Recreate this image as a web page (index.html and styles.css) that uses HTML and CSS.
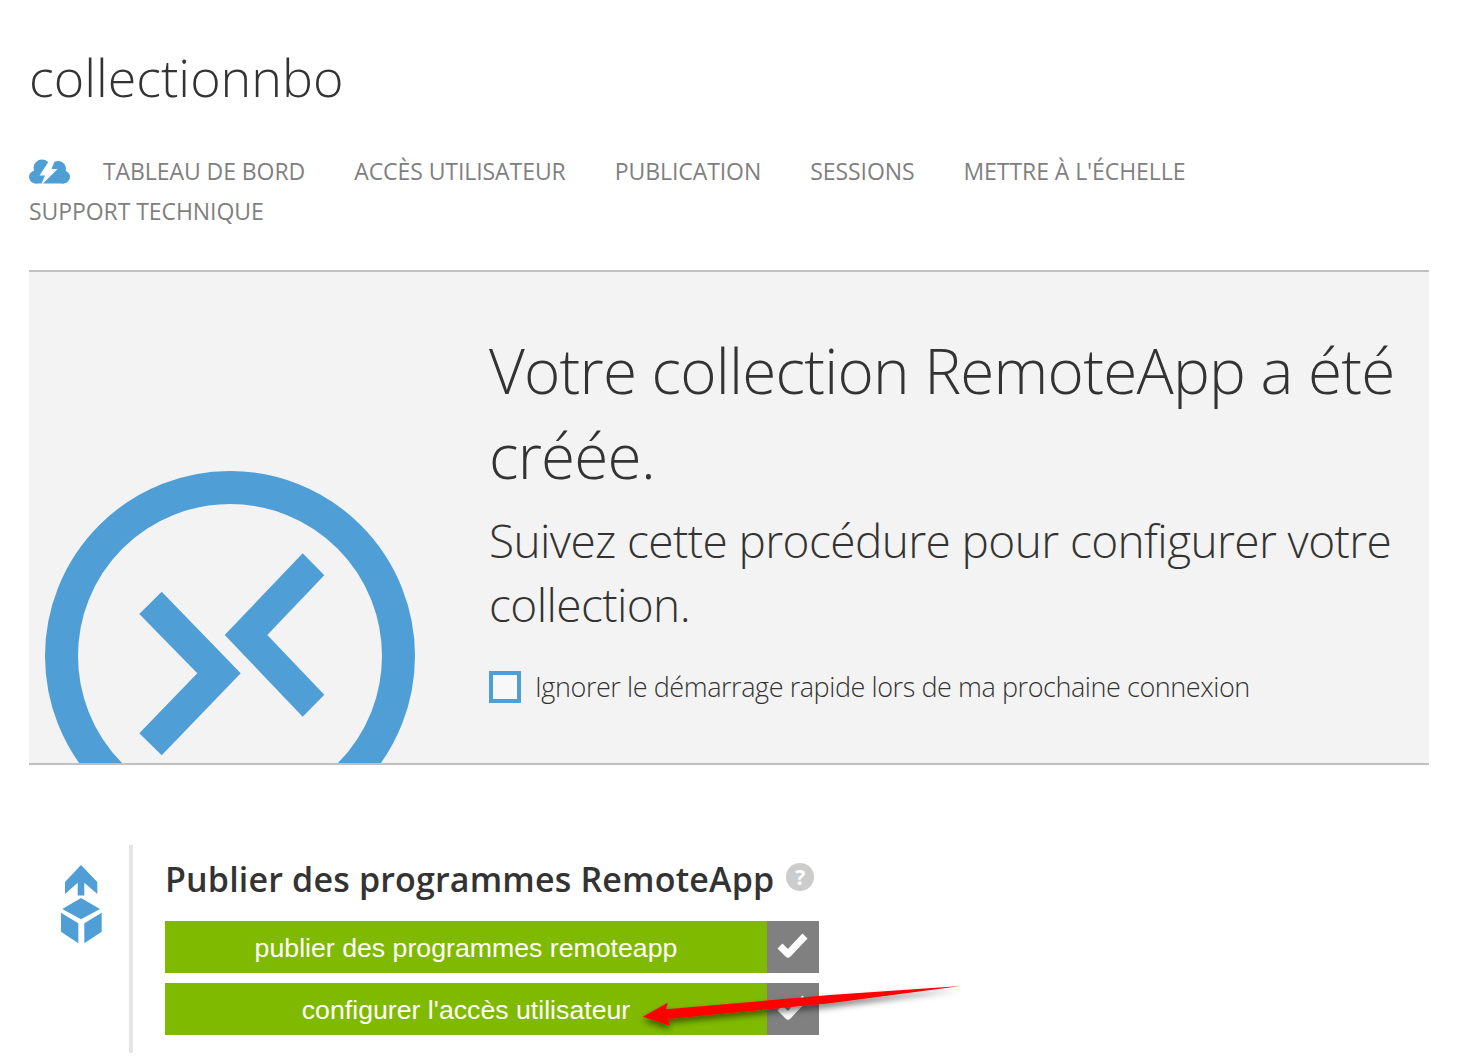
FILE: index.html
```html
<!DOCTYPE html>
<html lang="fr">
<head>
    <meta charset="UTF-8">
    <title>collectionnbo</title>
    <link rel="stylesheet" href="styles.css">
</head>
<body>
    <h1 class="title">collectionnbo</h1>

    <nav class="tabs">
        <svg class="tabs-icon" viewBox="0 0 41 26">
            <g fill="#4f9fd6">
                <circle cx="13" cy="10" r="8.500"/>
                <circle cx="29" cy="11" r="8"/>
                <circle cx="6.500" cy="19" r="6.500"/>
                <circle cx="34.500" cy="19" r="6.500"/>
                <rect x="6" y="13" width="29" height="12.500"/>
            </g>
            <path fill="#fff" d="M22 0 10.500 17.500H16L11.500 28 28.500 11H22.500L27 0z"/>
        </svg>
        <a class="tab">TABLEAU DE BORD</a>
        <a class="tab">ACCÈS UTILISATEUR</a>
        <a class="tab">PUBLICATION</a>
        <a class="tab">SESSIONS</a>
        <a class="tab">METTRE À L'ÉCHELLE</a>
        <a class="tab">SUPPORT TECHNIQUE</a>
    </nav>

    <section class="hero">
        <svg class="hero-logo" viewBox="0 0 370 292">
            <circle cx="185" cy="185" r="168.500" fill="none" stroke="#4f9fd6" stroke-width="33"/>
            <path fill="#4f9fd6" d="M116.700 120.700 94.300 143 152.300 202.300 94.300 262.300 116.700 284.300 195.700 202.300z"/>
            <path fill="#4f9fd6" d="M257.700 82.300 279.300 104.300 222.300 164 279.300 223.700 257.700 245.700 179.700 164z"/>
        </svg>
        <div class="hero-text">
            <h2 class="hero-title">Votre collection RemoteApp a été créée.</h2>
            <p class="hero-sub">Suivez cette procédure pour configurer votre collection.</p>
            <label class="skip">
                <span class="skip-box"></span>
                Ignorer le démarrage rapide lors de ma prochaine connexion
            </label>
        </div>
    </section>

    <section class="step">
        <div class="step-icon">
            <svg viewBox="0 0 41 80" width="41" height="80">
                <g fill="#4f9fd6">
                    <path d="M20 0 36.300 17V29L23.300 17.700V30.600H16.700V17.700L4 29V17z"/>
                    <path d="M20 33 1.300 44 20 54.300 39 44z"/>
                    <path d="M0 47.700 17.300 58.300V78.300L0 66.700z"/>
                    <path d="M23.300 58.300 40.700 47.700V66.700L23.300 78.300z"/>
                </g>
            </svg>
        </div>
        <div class="step-body">
            <h3 class="step-title">
                Publier des programmes RemoteApp
                <span class="help">?</span>
            </h3>
            <a class="action">
                <span class="action-label">publier des programmes remoteapp</span>
                <span class="action-check">
                    <svg viewBox="0 0 32 28" width="32" height="28"><path fill="none" stroke="#fff" stroke-width="7" stroke-linejoin="round" d="M3 13l8 8L28 3"/></svg>
                </span>
            </a>
            <a class="action">
                <span class="action-label">configurer l'accès utilisateur</span>
                <span class="action-check">
                    <svg viewBox="0 0 32 28" width="32" height="28"><path fill="none" stroke="#fff" stroke-width="7" stroke-linejoin="round" d="M3 13l8 8L28 3"/></svg>
                </span>
            </a>
        </div>
    </section>

    <svg class="arrow" viewBox="0 0 340 60" width="340" height="60">
        <defs>
            <filter id="arrowShadow" x="-10%" y="-50%" width="120%" height="220%">
                <feDropShadow dx="0" dy="4" stdDeviation="3" flood-color="#000" flood-opacity="0.5"/>
            </filter>
        </defs>
        <path fill="#f00" filter="url(#arrowShadow)" d="M12.700 36.700 37.700 22.700 36 29.300 200 15 331 6 200 23.300 38 39 40 45.700z"/>
    </svg>
</body>
</html>
```

FILE: styles.css
```css
html, body {
    height: 1059px;
    overflow: hidden;
}

body {
    margin: 0;
    padding: 0 29px;
    position: relative;
    background-color: #fff;
    font-family: "Open Sans", "Liberation Sans", sans-serif;
    color: #333;
}

.title {
    margin: 0;
    padding-top: 43px;
    font-size: 52px;
    line-height: 68px;
    font-weight: 300;
}

.tabs {
    display: flex;
    flex-wrap: wrap;
    align-items: center;
    margin-top: 40px;
    column-gap: 49px;
}

.tabs-icon {
    width: 41px;
    height: 26px;
    margin-right: -16px;
}

.tab {
    font-size: 23px;
    line-height: 40px;
    color: #7f7f7f;
    letter-spacing: -0.07px;
}

.hero {
    display: flex;
    margin-top: 39px;
    height: 491px;
    background-color: #f3f3f3;
    border-top: 2px solid #c0c0c0;
    border-bottom: 2px solid #c0c0c0;
}

.hero-logo {
    flex: none;
    width: 370px;
    height: 292px;
    margin: auto 0 0 16px;
}

.hero-text {
    flex: 1;
    padding: 56px 30px 0 74px;
}

.hero-title {
    margin: 0;
    font-size: 62px;
    line-height: 85px;
    font-weight: 300;
    letter-spacing: -0.77px;
}

.hero-sub {
    margin: 10px 0 0;
    font-size: 46px;
    line-height: 64px;
    font-weight: 300;
    letter-spacing: -0.6px;
}

.skip {
    display: flex;
    align-items: center;
    gap: 14px;
    margin-top: 33px;
    font-size: 27px;
    line-height: 36px;
    font-weight: 300;
    letter-spacing: -0.43px;
}

.skip-box {
    flex: none;
    box-sizing: border-box;
    width: 32px;
    height: 32px;
    border: 4px solid #4f9fd6;
    background-color: #f8f8f8;
}

.step {
    display: flex;
    margin-top: 80px;
    height: 208px;
}

.step-icon {
    box-sizing: border-box;
    flex: none;
    width: 104px;
    height: 100%;
    padding: 20px 0 0 32px;
    border-right: 4px solid #e5e5e5;
}

.step-body {
    padding-left: 32px;
}

.step-title {
    display: flex;
    align-items: center;
    gap: 12px;
    margin: 10px 0 0;
    font-size: 34px;
    line-height: 48px;
    font-weight: 600;
    letter-spacing: 0.17px;
    color: #333;
}

.help {
    width: 28px;
    height: 28px;
    border-radius: 50%;
    background-color: #ccc;
    color: #fff;
    font-size: 21px;
    line-height: 28px;
    font-weight: 700;
    text-align: center;
    letter-spacing: 0;
    margin-top: -4px;
}

.action {
    display: flex;
    width: 654px;
    height: 52px;
    margin-top: 10px;
    background-color: #7fba00;
    color: #fff;
    font-family: "Liberation Sans", Arial, sans-serif;
    font-size: 26.7px;
    line-height: 55px;
}

.step-title + .action {
    margin-top: 18px;
}

.action-label {
    flex: 1;
    text-align: center;
}

.action-check {
    display: flex;
    align-items: center;
    justify-content: center;
    flex: none;
    width: 52px;
    background-color: #808080;
}

.arrow {
    position: absolute;
    left: 630px;
    top: 980px;
}
```
